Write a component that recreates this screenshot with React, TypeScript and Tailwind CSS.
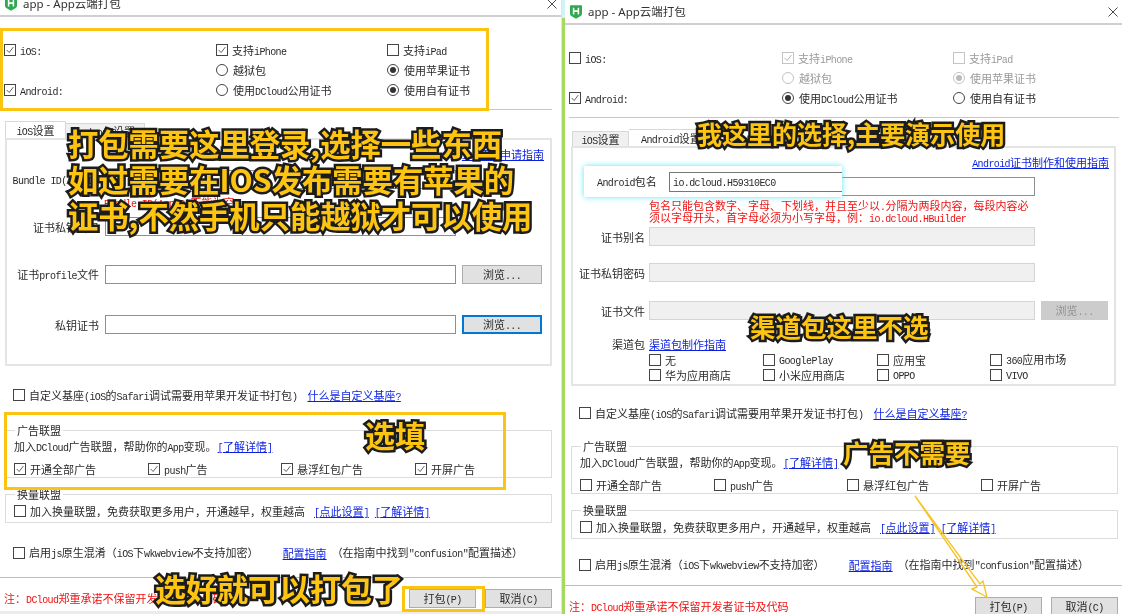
import type { ReactNode } from "react";

const latin = "font-['Liberation_Mono',monospace] text-[10px] leading-none tracking-[-0.6px]";

// SimSun style text: narrow latin next to full width CJK
const Tx = ({ children }: { children: string }) => (
  <span>
    {children.split(/([\x20-\x7e]+)/).map((part, idx) =>
      /^[\x20-\x7e]+$/.test(part) ? (
        <span key={idx} className={latin}>{part}</span>
      ) : (
        <span key={idx}>{part}</span>
      ),
    )}
  </span>
);

const Link = ({ children, className = "" }: { children: string; className?: string }) => (
  <span className={`text-[#0a1fe0] underline whitespace-nowrap h-[14px] ${className}`}>
    <Tx>{children}</Tx>
  </span>
);

const Check = ({ label, checked, disabled, className = "" }: { label?: string; checked?: boolean; disabled?: boolean; className?: string }) => (
  <div className={`flex items-center gap-[4px] h-[14px] whitespace-nowrap ${disabled ? "text-[#9a9a9a]" : ""} ${className}`}>
    <span className={`w-[12px] h-[12px] shrink-0 border bg-white ${disabled ? "border-[#c4c4c4]" : "border-[#444]"}`}>
      {checked && (
        <svg viewBox="0 0 12 12" className="w-full h-full" fill="none" stroke={disabled ? "#aaa" : "#444"} strokeWidth="1">
          <path d="M2 6 L5 9 L10 2.5" />
        </svg>
      )}
    </span>
    {label && <Tx>{label}</Tx>}
  </div>
);

const Radio = ({ label, checked, disabled }: { label: string; checked?: boolean; disabled?: boolean }) => (
  <div className={`flex items-center gap-[5px] h-[14px] whitespace-nowrap ${disabled ? "text-[#9a9a9a]" : ""}`}>
    <span className={`w-[12px] h-[12px] shrink-0 rounded-full border bg-white flex items-center justify-center ${disabled ? "border-[#c4c4c4]" : "border-[#444]"}`}>
      {checked && <span className={`w-[6px] h-[6px] rounded-full ${disabled ? "bg-[#bbb]" : "bg-[#333]"}`} />}
    </span>
    <Tx>{label}</Tx>
  </div>
);

const Input = ({ disabled, children, className = "" }: { disabled?: boolean; children?: ReactNode; className?: string }) => (
  <div className={`h-[19px] border flex items-center px-[3px] ${disabled ? "bg-[#f0f0f0] border-[#d4d4d4]" : "bg-white border-[#8f8f8f]"} ${className}`}>
    {children}
  </div>
);

const Browse = ({ focused, disabled }: { focused?: boolean; disabled?: boolean }) => (
  <div
    className={`h-[19px] flex items-center justify-center ${
      disabled
        ? "w-[67px] ml-[6px] bg-[#cccccc] text-[#909090]"
        : focused
          ? "w-[80px] ml-[6px] bg-[#e1e1e1] border-2 border-[#0078d7]"
          : "w-[80px] ml-[6px] bg-[#e1e1e1] border border-[#adadad]"
    }`}
  >
    <Tx>浏览...</Tx>
  </div>
);

const FormRow = ({ label, labelWidth, mt, children }: { label: string; labelWidth: string; mt: string; children: ReactNode }) => (
  <div className={`flex items-center h-[19px] ${mt}`}>
    <div className={`${labelWidth} text-right whitespace-nowrap shrink-0`}>
      <Tx>{label}</Tx>
    </div>
    {children}
  </div>
);

const TitleBar = () => (
  <div className="h-[25px] shrink-0 flex items-center border-b-2 border-[#cfcfcf] bg-white">
    <svg viewBox="0 0 14 16" className="w-[12px] h-[14px] ml-[5px]">
      <path d="M0 1 Q0 0 1 0 H13 Q14 0 14 1 V10 Q14 12 12 13 L7 16 L2 13 Q0 12 0 10 Z" fill="#2fa84f" />
      <path d="M4.2 3 V11 M9.8 3 V11 M4.2 7 H9.8" stroke="#fff" strokeWidth="1.8" fill="none" />
    </svg>
    <span className="ml-[6px] text-[11.5px] text-[#333] font-['Noto_Sans','Noto_Sans_CJK_SC',sans-serif]">app - App云端打包</span>
    <svg viewBox="0 0 10 10" className="w-[10px] h-[10px] ml-auto mr-[4px]" stroke="#333" strokeWidth="0.9">
      <path d="M0.5 0.5 L9.5 9.5 M9.5 0.5 L0.5 9.5" />
    </svg>
  </div>
);

const Platforms = ({ ios }: { ios: boolean }) => (
  <div className={`grid ${ios ? "grid-cols-[212px_171px_1fr] ml-[4px] mr-[9px]" : "grid-cols-[213px_171px_1fr] ml-[4px] mr-[3px]"} mt-[23px] pb-[9px] auto-rows-[20px] items-center border-b border-[#c8c8c8]`}>
    <Check label="iOS:" checked={ios} />
    <Check label="支持iPhone" checked disabled={!ios} />
    <Check label="支持iPad" disabled={!ios} />
    <div />
    <Radio label="越狱包" disabled={!ios} />
    <Radio label="使用苹果证书" checked disabled={!ios} />
    <Check label="Android:" checked />
    <Radio label="使用DCloud公用证书" checked={!ios} />
    <Radio label="使用自有证书" checked={ios} />
  </div>
);

const AdGroup = ({ checked, className }: { checked: boolean; className: string }) => (
  <fieldset className={`border border-[#dcdcdc] ${className}`}>
    <legend className="ml-[9px] px-[2px]"><Tx>广告联盟</Tx></legend>
    <div className="ml-[8px] h-[16px] mt-[1px] flex items-center whitespace-nowrap">
      <Tx>加入DCloud广告联盟，帮助你的App变现。</Tx>
      <Link className="ml-[1px]">[了解详情]</Link>
    </div>
    <div className="ml-[8px] mt-[8px] mb-[1px] grid grid-cols-[134px_133px_134px_1fr]">
      <Check label="开通全部广告" checked={checked} />
      <Check label="push广告" checked={checked} />
      <Check label="悬浮红包广告" checked={checked} />
      <Check label="开屏广告" checked={checked} />
    </div>
  </fieldset>
);

const SwapGroup = ({ className }: { className: string }) => (
  <fieldset className={`border border-[#dcdcdc] ${className}`}>
    <legend className="ml-[9px] px-[2px]"><Tx>换量联盟</Tx></legend>
    <div className="ml-[8px] mt-[3px] mb-[4px] flex items-center whitespace-nowrap">
      <Check label="加入换量联盟，免费获取更多用户，开通越早，权重越高" />
      <Link className="ml-[9px]">[点此设置]</Link>
      <Link className="ml-[6px]">[了解详情]</Link>
    </div>
  </fieldset>
);

const CustomBase = ({ className }: { className: string }) => (
  <div className={`flex items-center whitespace-nowrap ${className}`}>
    <Check label="自定义基座(iOS的Safari调试需要用苹果开发证书打包)" />
    <Link className="ml-[10px]">什么是自定义基座?</Link>
  </div>
);

const Confusion = ({ className }: { className: string }) => (
  <div className={`flex items-center whitespace-nowrap ${className}`}>
    <Check label="启用js原生混淆（iOS下wkwebview不支持加密）" />
    <Link className="ml-[24px]">配置指南</Link>
    <span className="ml-[5px]"><Tx>（在指南中找到"confusion"配置描述）</Tx></span>
  </div>
);

const Footer = ({ className }: { className: string }) => (
  <div className={`flex items-start border-t border-[#bdbdbd] h-[34px] shrink-0 ${className}`}>
    <span className="text-[#f01010] ml-[4px] mt-[13px] whitespace-nowrap"><Tx>注：DCloud郑重承诺不保留开发者证书及代码</Tx></span>
    <div className="ml-auto flex gap-[9px] mt-[11px]">
      <div className="w-[67px] h-[19px] bg-[#e1e1e1] border border-[#adadad] flex items-center justify-center"><Tx>打包(P)</Tx></div>
      <div className="w-[67px] h-[19px] bg-[#e1e1e1] border border-[#adadad] flex items-center justify-center"><Tx>取消(C)</Tx></div>
    </div>
  </div>
);

const LeftWindow = () => (
  <div className="w-[561px] shrink-0 -mt-[8px] flex flex-col">
    <TitleBar />
    <Platforms ios />
    <div className="ml-[5px] mt-[11px] flex h-[18px] items-end">
      <div className="w-[61px] h-[18px] bg-white border border-b-0 border-[#d8d8d8] flex items-center justify-center"><Tx>iOS设置</Tx></div>
      <div className="w-[79px] h-[16px] bg-[#f0f0f0] border border-l-0 border-b-0 border-[#d8d8d8] flex items-center justify-center"><Tx>Android设置</Tx></div>
    </div>
    <div className="ml-[5px] mr-[9px] h-[228px] shrink-0 border-2 border-[#e4e4e4] pr-[6px] -mt-px">
      <div className="flex justify-end mt-[7px] h-[14px] items-center"><Link>iOS证书申请指南</Link></div>
      <FormRow label="Bundle ID(AppID)" labelWidth="w-[92px]" mt="mt-[9px]">
        <Input className="ml-[6px] w-[351px]" />
      </FormRow>
      <div className="ml-[97px] mt-[6px] h-[14px] flex items-center text-[#f01010] whitespace-nowrap"><Tx>Bundle ID(AppID)不能为空</Tx></div>
      <FormRow label="证书私钥密码" labelWidth="w-[92px]" mt="mt-[8px]">
        <Input className="ml-[6px] w-[351px]" />
      </FormRow>
      <FormRow label="证书profile文件" labelWidth="w-[92px]" mt="mt-[29px]">
        <Input className="ml-[6px] w-[351px]" />
        <Browse />
      </FormRow>
      <FormRow label="私钥证书" labelWidth="w-[92px]" mt="mt-[31px]">
        <Input className="ml-[6px] w-[351px]" />
        <Browse focused />
      </FormRow>
    </div>
    <CustomBase className="ml-[13px] mt-[22px] shrink-0" />
    <AdGroup checked className="ml-[5px] mr-[9px] mt-[21px] shrink-0" />
    <SwapGroup className="ml-[5px] mr-[9px] mt-[9px] shrink-0" />
    <Confusion className="ml-[13px] mt-[22px] shrink-0" />
    <Footer className="mt-[17px] pr-[9px]" />
    <div className="h-[4px] bg-[#ececec] shrink-0" />
  </div>
);

const channels = ["无", "GooglePlay", "应用宝", "360应用市场", "华为应用商店", "小米应用商店", "OPPO", "VIVO"];

const RightWindow = () => (
  <div className="flex-1 flex flex-col min-w-0">
    <TitleBar />
    <Platforms ios={false} />
    <div className="ml-[7px] mt-[11px] flex h-[18px] items-end shrink-0">
      <div className="w-[57px] h-[16px] bg-[#f0f0f0] border border-b-0 border-[#d8d8d8] flex items-center justify-center"><Tx>iOS设置</Tx></div>
      <div className="w-[76px] h-[18px] bg-white border border-l-0 border-b-0 border-[#d8d8d8] flex items-center pl-[12px] whitespace-nowrap"><Tx>Android设置</Tx></div>
    </div>
    <div className="ml-[6px] mr-[6px] h-[240px] shrink-0 border-2 border-[#e4e4e4] -mt-px">
      <div className="flex justify-end mt-[7px] h-[14px] items-center pr-[5px]"><Link>Android证书制作和使用指南</Link></div>
      <FormRow label="" labelWidth="w-[72px]" mt="mt-[8px]">
        <Input className="ml-[4px] w-[386px]" />
      </FormRow>
      <div className="ml-[76px] mt-[3px] text-[#f01010] whitespace-nowrap">
        <div className="h-[12px] flex items-center"><Tx>包名只能包含数字、字母、下划线，并且至少以.分隔为两段内容，每段内容必</Tx></div>
        <div className="h-[12px] flex items-center"><Tx>须以字母开头，首字母必须为小写字母，例：io.dcloud.HBuilder</Tx></div>
      </div>
      <FormRow label="证书别名" labelWidth="w-[72px]" mt="mt-[4px]">
        <Input disabled className="ml-[4px] w-[386px]" />
      </FormRow>
      <FormRow label="证书私钥密码" labelWidth="w-[72px]" mt="mt-[17px]">
        <Input disabled className="ml-[4px] w-[386px]" />
      </FormRow>
      <FormRow label="证书文件" labelWidth="w-[72px]" mt="mt-[19px]">
        <Input disabled className="ml-[4px] w-[386px]" />
        <Browse disabled />
      </FormRow>
      <div className="flex items-center h-[14px] mt-[17px]">
        <div className="w-[72px] text-right whitespace-nowrap">渠道包</div>
        <Link className="ml-[4px]">渠道包制作指南</Link>
      </div>
      <div className="ml-[76px] mt-[1px] grid grid-cols-[114px_114px_113px_1fr] auto-rows-[15px] items-center">
        {channels.map((name) => (
          <Check key={name} label={name} />
        ))}
      </div>
    </div>
    <CustomBase className="ml-[14px] mt-[20px] shrink-0" />
    <AdGroup checked={false} className="ml-[6px] mr-[4px] mt-[19px] shrink-0" />
    <SwapGroup className="ml-[6px] mr-[4px] mt-[9px] shrink-0" />
    <Confusion className="ml-[14px] mt-[18px] shrink-0" />
    <Footer className="mt-[13px] pr-[4px]" />
  </div>
);

const Caption = ({ className, children }: { className: string; children: ReactNode }) => (
  <div className={`absolute font-bold text-[#fdc412] whitespace-nowrap [-webkit-text-stroke:5px_#1c1c1c] [paint-order:stroke_fill] ${className}`}>
    {children}
  </div>
);

export default function App() {
  return (
    <div className="relative w-[1122px] h-[614px] overflow-hidden flex bg-white text-[11px] leading-[14px] text-[#2a2a2a] blur-[0.35px] font-['Noto_Sans_CJK_SC',sans-serif]">
      <LeftWindow />
      <div className="w-px shrink-0 bg-[#c8f0f4]" />
      <div className="w-[3px] shrink-0 bg-[#a5d95f] flex flex-col">
        <div className="h-[18px] bg-[#d0f3f5]" />
      </div>
      <RightWindow />

      {/* yellow marks drawn over the two screenshots */}
      <div className="absolute left-0 top-[28px] w-[489px] h-[83px] border-[3px] border-[#fbc411]" />
      <div className="absolute left-[4px] top-[412px] w-[502px] h-[78px] border-[3px] border-[#fbc411]" />
      <div className="absolute left-[402px] top-[586px] w-[83px] h-[26px] border-[3px] border-[#fbc411]" />

      <Caption className="left-[68px] top-[125px] text-[30.3px] leading-[36px]">
        <div>打包需要这里登录,选择一些东西</div>
        <div>如过需要在IOS发布需要有苹果的</div>
        <div>证书,不然手机只能越狱才可以使用</div>
      </Caption>
      <Caption className="left-[365px] top-[416px] text-[30px] leading-[36px]">选填</Caption>
      <Caption className="left-[155px] top-[570px] text-[31px] leading-[36px]">选好就可以打包了</Caption>
      <Caption className="left-[697px] top-[118px] text-[25px] leading-[30px]">我这里的选择,主要演示使用</Caption>
      <Caption className="left-[750px] top-[311px] text-[25.5px] leading-[30px]">渠道包这里不选</Caption>
      <Caption className="left-[843px] top-[437px] text-[25.5px] leading-[30px]">广告不需要</Caption>

      {/* popup of the package name field */}
      <div className="absolute left-[584px] top-[166px] w-[258px] h-[31px] bg-white shadow-[0_0_6px_#5fe6f5] flex items-center">
        <span className="ml-[13px] w-[72px] whitespace-nowrap"><Tx>Android包名</Tx></span>
        <div className="w-[173px] h-[20px] border border-[#777] border-r-0 flex items-center px-[3px]"><Tx>io.dcloud.H59310EC0</Tx></div>
      </div>

      <svg className="absolute left-[905px] top-[490px] w-[100px] h-[112px]" viewBox="0 0 100 112" fill="none" stroke="#f7c52a" strokeWidth="1.4">
        <path d="M10 6 L72 97 L67 99 L82 107 L78 91 L75 94 Z" />
      </svg>
    </div>
  );
}
